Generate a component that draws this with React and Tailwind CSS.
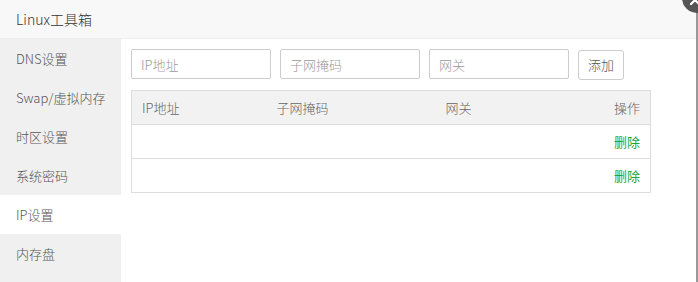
import { useState } from 'react';

const menu = ['DNS设置', 'Swap/虚拟内存', '时区设置', '系统密码', 'IP设置', '内存盘'];

const App = () => {
  const [active, setActive] = useState('IP设置');
  const [rows] = useState([{ id: 1 }, { id: 2 }]);

  return (
    <div
      className="relative flex h-[282px] w-[698px] overflow-hidden bg-white text-[13px] font-light text-[#555]"
      style={{ fontFamily: '"Noto Sans CJK SC", "Noto Sans", sans-serif' }}
    >
      <div className="flex w-[696px] flex-col">
        {/* Title bar */}
        <div className="flex h-[39px] shrink-0 items-center border-b border-[#eee] bg-[#f8f8f8] pl-4 text-[14px] text-[#333]">
          Linux工具箱
        </div>

        <div className="flex flex-1">
          {/* Sidebar */}
          <div className="w-[121px] shrink-0 bg-[#f0f0f0]">
            {menu.map((m) => (
              <div
                key={m}
                onClick={() => setActive(m)}
                className={`flex h-[39px] cursor-pointer items-center pl-4 ${
                  active === m ? 'bg-white' : ''
                }`}
              >
                {m}
              </div>
            ))}
          </div>

          {/* Content */}
          <div className="flex-1 pl-[10px] pt-[10px]">
            <div className="flex items-start gap-[9px]">
              <input
                placeholder="IP地址"
                className="h-[30px] w-[140px] rounded-[2px] border border-[#ccc] px-[9px] text-[13px] outline-none placeholder:text-[#999]"
              />
              <input
                placeholder="子网掩码"
                className="h-[30px] w-[140px] rounded-[2px] border border-[#ccc] px-[9px] text-[13px] outline-none placeholder:text-[#999]"
              />
              <input
                placeholder="网关"
                className="h-[30px] w-[140px] rounded-[2px] border border-[#ccc] px-[9px] text-[13px] outline-none placeholder:text-[#999]"
              />
              <button className="mt-px h-[30px] w-[46px] rounded-[3px] border border-[#ccc] bg-white text-[13px] text-[#555]">
                添加
              </button>
            </div>

            <table className="mt-[10px] w-[520px] table-fixed border-collapse border border-[#ddd]">
              <thead className="bg-[#f2f2f2]">
                <tr className="h-[34px] text-[#666]">
                  <th className="w-[135px] px-[10px] text-left font-light">IP地址</th>
                  <th className="w-[169px] px-[10px] text-left font-light">子网掩码</th>
                  <th className="w-[120px] px-[10px] text-left font-light">网关</th>
                  <th className="px-[10px] text-right font-light">操作</th>
                </tr>
              </thead>
              <tbody>
                {rows.map((r) => (
                  <tr key={r.id} className="h-[34px] border-t border-[#ddd]">
                    <td className="px-[10px]"></td>
                    <td className="px-[10px]"></td>
                    <td className="px-[10px]"></td>
                    <td className="px-[10px] text-right">
                      <a className="cursor-pointer font-normal text-[#20a53a]">删除</a>
                    </td>
                  </tr>
                ))}
              </tbody>
            </table>
          </div>
        </div>
      </div>

      {/* right edge shadow */}
      <div className="w-[2px] shrink-0 bg-[#999]"></div>

      {/* close button */}
      <div className="absolute left-[682px] top-[-17px] z-10 h-[30px] w-[30px] rounded-full bg-[#555]">
        <svg width="30" height="30" viewBox="0 0 30 30" className="block">
          <path d="M9 13 L17 21 M17 13 L9 21" stroke="#fff" strokeWidth="2.2" strokeLinecap="round" />
        </svg>
      </div>
    </div>
  );
};

export default App;
